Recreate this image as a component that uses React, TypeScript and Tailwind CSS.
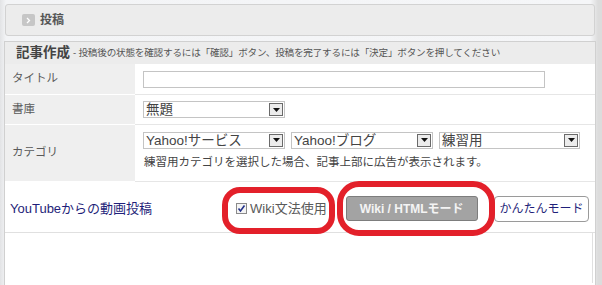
const jp = { fontFamily: '"Liberation Sans", "Noto Sans CJK JP", sans-serif' };

function Select({ label, w }: { label: string; w: string }) {
  return (
    <div
      className={`${w} h-[17px] flex items-center justify-between border border-[#c4c4c4] bg-white pl-[2px] pr-[1px]`}
    >
      <span className="text-[13.5px] leading-none text-[#444]">{label}</span>
      <span className="w-[14px] h-[13px] border border-[#6a6a6a] bg-[#ececec] flex items-center justify-center">
        <svg width="7" height="4" viewBox="0 0 7 4">
          <path d="M0 0h7L3.5 4z" fill="#111" />
        </svg>
      </span>
    </div>
  );
}

function Row({
  label,
  h,
  children,
}: {
  label: string;
  h: string;
  children: React.ReactNode;
}) {
  return (
    <div className={`flex ${h}`}>
      <div className="w-[130px] shrink-0 bg-[#efefef] border-b border-white flex items-center pl-[7px] text-[11.5px] text-[#5a5a5a]">
        {label}
      </div>
      <div className="flex-1 border-b border-[#e6e6e6] pl-[8px] flex flex-col justify-center">
        {children}
      </div>
    </div>
  );
}

export default function App() {
  return (
    <div
      className="relative w-[602px] h-[285px] overflow-hidden bg-[linear-gradient(90deg,#e2e3e5_0px,#f3f4f6_6px,#f5f6f8_590px,#dcdcdc_598px)] pt-[4px]"
      style={jp}
    >
      {/* top panel */}
      <div className="ml-[5px] w-[590px] h-[32px] rounded-[3px] border border-[#d2d2d2] bg-[#ececec] flex items-center pl-[16px] gap-[5px]">
        <span className="w-[13px] h-[12px] rounded-[2px] bg-[#c6c6c6] flex items-center justify-center">
          <svg width="5" height="7" viewBox="0 0 5 7">
            <path d="M1 1l2.5 2.5L1 6" stroke="#fff" strokeWidth="1.3" fill="none" />
          </svg>
        </span>
        <span className="text-[12px] font-bold text-[#555]">投稿</span>
      </div>

      {/* section */}
      <div className="mt-[5px] ml-[4px] w-[592px] h-[250px] border border-[#d0d0d0] bg-white">
        <div className="h-[22px] bg-[#ececec] flex items-center pl-[11px] gap-[3px]">
          <span className="text-[13.5px] font-bold text-[#444]">記事作成</span>
          <span className="text-[9.6px] text-[#555] tracking-[-0.2px]">
            - 投稿後の状態を確認するには「確認」ボタン、投稿を完了するには「決定」ボタンを押してください
          </span>
        </div>

        <Row label="タイトル" h="h-[31px]">
          <div className="w-[402px] h-[17px] border border-[#c4c4c4] bg-white" />
        </Row>
        <Row label="書庫" h="h-[30px]">
          <Select label="無題" w="w-[142px]" />
        </Row>
        <Row label="カテゴリ" h="h-[57px]">
          <div className="flex gap-[6px] -mt-[3px]">
            <Select label="Yahoo!サービス" w="w-[142px]" />
            <Select label="Yahoo!ブログ" w="w-[142px]" />
            <Select label="練習用" w="w-[141px]" />
          </div>
          <div className="mt-[5px] text-[11.5px] text-[#444] pl-[1px]">
            練習用カテゴリを選択した場合、記事上部に広告が表示されます。
          </div>
        </Row>

        <div className="h-[51px] border-b border-[#e0e0e0] flex items-center pl-[5px] pr-[6px] pt-[3px]">
          <span className="text-[13px] text-[#1f1f7a]">YouTubeからの動画投稿</span>
          <label className="ml-[84px] flex items-center gap-[3px] text-[13px] text-[#5a5a5a]">
            <span className="w-[11px] h-[11px] border border-[#8a8a8a] bg-[#f4f4f4] flex items-center justify-center">
              <svg width="9" height="9" viewBox="0 0 9 9">
                <path d="M1.5 4.5l2 2.5 4-5.5" stroke="#23328a" strokeWidth="1.6" fill="none" />
              </svg>
            </span>
            Wiki文法使用
          </label>
          <span className="ml-[3px] w-[2px] h-[6px] bg-[#f2c14a]" />
          <button className="ml-[14px] w-[132px] h-[25px] rounded-[3px] border border-[#7d7d7d] bg-[#a3a3a3] text-[12px] font-bold text-[#f4f4f4]">
            Wiki / HTMLモード
          </button>
          <button className="ml-auto w-[95px] h-[26px] rounded-[4px] border border-[#9a9a9a] bg-white text-[12px] text-[#1f1f7a]">
            かんたんモード
          </button>
        </div>
        <div className="h-[50px] border-r border-[#e0e0e0] mr-[2px]" />
      </div>

      {/* annotation ovals */}
      <div className="absolute left-[222px] top-[187px] w-[113px] h-[47px] rounded-[18px] border-[6px] border-[#e3202a]" />
      <div className="absolute left-[337px] top-[181px] w-[158px] h-[55px] rounded-[22px] border-[6px] border-[#e3202a]" />
    </div>
  );
}
